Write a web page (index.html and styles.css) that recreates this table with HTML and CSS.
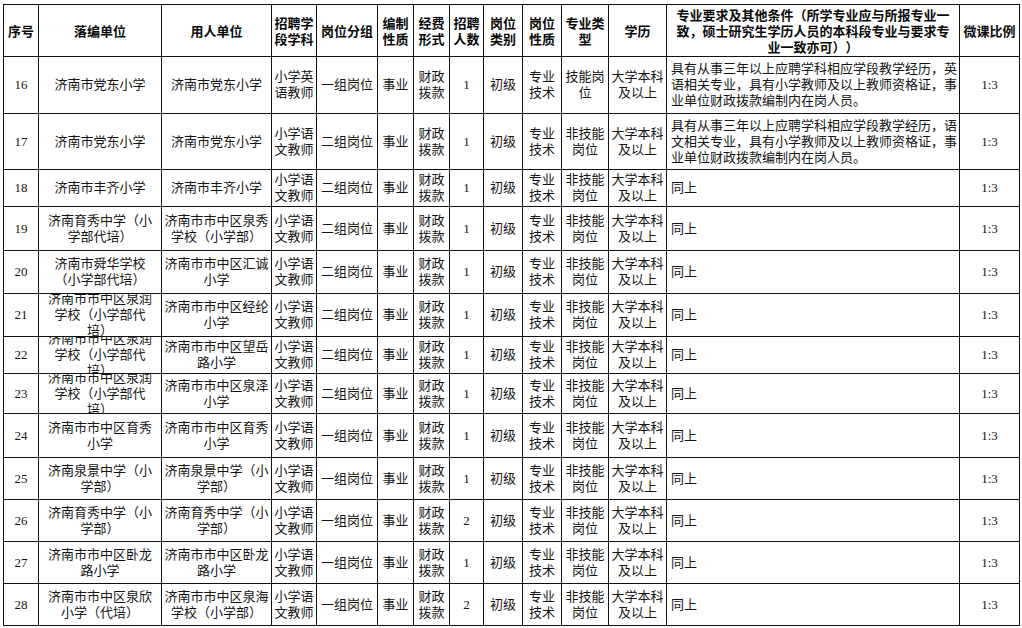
FILE: index.html
```html
<!DOCTYPE html>
<html lang="zh-CN">
<head>
<meta charset="utf-8">
<title>招聘岗位表</title>
<link rel="stylesheet" href="styles.css">
</head>
<body>
<div class="sheet">
  <div class="c hd">序号</div>
  <div class="c hd">落编单位</div>
  <div class="c hd">用人单位</div>
  <div class="c hd">招聘学段学科</div>
  <div class="c hd">岗位分组</div>
  <div class="c hd">编制性质</div>
  <div class="c hd">经费形式</div>
  <div class="c hd">招聘人数</div>
  <div class="c hd">岗位类别</div>
  <div class="c hd">岗位性质</div>
  <div class="c hd">专业类型</div>
  <div class="c hd">学历</div>
  <div class="c hd wide">专业要求及其他条件（所学专业应与所报专业一致，硕士研究生学历人员的本科段专业与要求专业一致亦可））</div>
  <div class="c hd">微课比例</div>

  <div class="c">16</div><div class="c u2">济南市党东小学</div><div class="c u3">济南市党东小学</div><div class="c">小学英语教师</div><div class="c">一组岗位</div><div class="c">事业</div><div class="c">财政拨款</div><div class="c">1</div><div class="c">初级</div><div class="c">专业技术</div><div class="c">技能岗位</div><div class="c">大学本科及以上</div><div class="c req">具有从事三年以上应聘学科相应学段教学经历，英语相关专业，具有小学教师及以上教师资格证，事业单位财政拨款编制内在岗人员。</div><div class="c">1:3</div>

  <div class="c">17</div><div class="c u2">济南市党东小学</div><div class="c u3">济南市党东小学</div><div class="c">小学语文教师</div><div class="c">二组岗位</div><div class="c">事业</div><div class="c">财政拨款</div><div class="c">1</div><div class="c">初级</div><div class="c">专业技术</div><div class="c">非技能岗位</div><div class="c">大学本科及以上</div><div class="c req">具有从事三年以上应聘学科相应学段教学经历，语文相关专业，具有小学教师及以上教师资格证，事业单位财政拨款编制内在岗人员。</div><div class="c">1:3</div>

  <div class="c">18</div><div class="c u2">济南市丰齐小学</div><div class="c u3">济南市丰齐小学</div><div class="c">小学语文教师</div><div class="c">二组岗位</div><div class="c">事业</div><div class="c">财政拨款</div><div class="c">1</div><div class="c">初级</div><div class="c">专业技术</div><div class="c">非技能岗位</div><div class="c">大学本科及以上</div><div class="c req">同上</div><div class="c">1:3</div>

  <div class="c">19</div><div class="c u2">济南育秀中学（小学部代培）</div><div class="c u3">济南市市中区泉秀学校（小学部）</div><div class="c">小学语文教师</div><div class="c">二组岗位</div><div class="c">事业</div><div class="c">财政拨款</div><div class="c">1</div><div class="c">初级</div><div class="c">专业技术</div><div class="c">非技能岗位</div><div class="c">大学本科及以上</div><div class="c req">同上</div><div class="c">1:3</div>

  <div class="c">20</div><div class="c u2">济南市舜华学校（小学部代培）</div><div class="c u3">济南市市中区汇诚小学</div><div class="c">小学语文教师</div><div class="c">二组岗位</div><div class="c">事业</div><div class="c">财政拨款</div><div class="c">1</div><div class="c">初级</div><div class="c">专业技术</div><div class="c">非技能岗位</div><div class="c">大学本科及以上</div><div class="c req">同上</div><div class="c">1:3</div>

  <div class="c">21</div><div class="c u2">济南市市中区泉润学校（小学部代培）</div><div class="c u3">济南市市中区经纶小学</div><div class="c">小学语文教师</div><div class="c">二组岗位</div><div class="c">事业</div><div class="c">财政拨款</div><div class="c">1</div><div class="c">初级</div><div class="c">专业技术</div><div class="c">非技能岗位</div><div class="c">大学本科及以上</div><div class="c req">同上</div><div class="c">1:3</div>

  <div class="c">22</div><div class="c u2">济南市市中区泉润学校（小学部代培）</div><div class="c u3">济南市市中区望岳路小学</div><div class="c">小学语文教师</div><div class="c">二组岗位</div><div class="c">事业</div><div class="c">财政拨款</div><div class="c">1</div><div class="c">初级</div><div class="c">专业技术</div><div class="c">非技能岗位</div><div class="c">大学本科及以上</div><div class="c req">同上</div><div class="c">1:3</div>

  <div class="c">23</div><div class="c u2">济南市市中区泉润学校（小学部代培）</div><div class="c u3">济南市市中区泉泽小学</div><div class="c">小学语文教师</div><div class="c">二组岗位</div><div class="c">事业</div><div class="c">财政拨款</div><div class="c">1</div><div class="c">初级</div><div class="c">专业技术</div><div class="c">非技能岗位</div><div class="c">大学本科及以上</div><div class="c req">同上</div><div class="c">1:3</div>

  <div class="c">24</div><div class="c u2">济南市市中区育秀小学</div><div class="c u3">济南市市中区育秀小学</div><div class="c">小学语文教师</div><div class="c">一组岗位</div><div class="c">事业</div><div class="c">财政拨款</div><div class="c">1</div><div class="c">初级</div><div class="c">专业技术</div><div class="c">非技能岗位</div><div class="c">大学本科及以上</div><div class="c req">同上</div><div class="c">1:3</div>

  <div class="c">25</div><div class="c u2">济南泉景中学（小学部）</div><div class="c u3">济南泉景中学（小学部）</div><div class="c">小学语文教师</div><div class="c">一组岗位</div><div class="c">事业</div><div class="c">财政拨款</div><div class="c">1</div><div class="c">初级</div><div class="c">专业技术</div><div class="c">非技能岗位</div><div class="c">大学本科及以上</div><div class="c req">同上</div><div class="c">1:3</div>

  <div class="c">26</div><div class="c u2">济南育秀中学（小学部）</div><div class="c u3">济南育秀中学（小学部）</div><div class="c">小学语文教师</div><div class="c">一组岗位</div><div class="c">事业</div><div class="c">财政拨款</div><div class="c">2</div><div class="c">初级</div><div class="c">专业技术</div><div class="c">非技能岗位</div><div class="c">大学本科及以上</div><div class="c req">同上</div><div class="c">1:3</div>

  <div class="c">27</div><div class="c u2">济南市市中区卧龙路小学</div><div class="c u3">济南市市中区卧龙路小学</div><div class="c">小学语文教师</div><div class="c">一组岗位</div><div class="c">事业</div><div class="c">财政拨款</div><div class="c">1</div><div class="c">初级</div><div class="c">专业技术</div><div class="c">非技能岗位</div><div class="c">大学本科及以上</div><div class="c req">同上</div><div class="c">1:3</div>

  <div class="c">28</div><div class="c u2">济南市市中区泉欣小学（代培）</div><div class="c u3">济南市市中区泉海学校（小学部）</div><div class="c">小学语文教师</div><div class="c">一组岗位</div><div class="c">事业</div><div class="c">财政拨款</div><div class="c">2</div><div class="c">初级</div><div class="c">专业技术</div><div class="c">非技能岗位</div><div class="c">大学本科及以上</div><div class="c req">同上</div><div class="c">1:3</div>
</div>
</body>
</html>
```

FILE: styles.css
```css
html, body {
  margin: 0;
  padding: 0;
  background: #ffffff;
}

body {
  font-family: "Liberation Serif", "Noto Sans CJK SC", serif;
  font-size: 13px;
  line-height: 16px;
  color: #141414;
  text-spacing-trim: space-all;
  font-feature-settings: "halt" 0, "chws" 0, "palt" 0;
}

.sheet {
  display: grid;
  grid-template-columns: 35px 123px 110px 45px 61px 36px 36px 34px 39px 39px 47px 58px 293px 60px;
  grid-template-rows: 52px 57px 56px 37px 44px 43px 43px 37px 40px 44px 42px 42px 42px 42px;
  width: max-content;
  margin: 4px 0 0 3px;
  border-left: 1px solid #111;
  border-top: 1px solid #111;
}

.c {
  box-sizing: border-box;
  border-right: 1px solid #111;
  border-bottom: 1px solid #111;
  display: flex;
  align-items: center;
  justify-content: center;
  text-align: center;
  overflow: hidden;
  padding: 0;
  min-width: 0;
  min-height: 0;
}

.hd {
  font-family: "Noto Sans CJK SC", sans-serif;
  font-weight: 700;
  color: #0a0a0a;
}

.wide {
  padding: 0 6px;
}

.u2 {
  padding: 0 4px;
}

.u3 {
  padding: 0 2px;
}

.req {
  justify-content: flex-start;
  text-align: left;
  padding: 0 2px 0 4px;
}
```
